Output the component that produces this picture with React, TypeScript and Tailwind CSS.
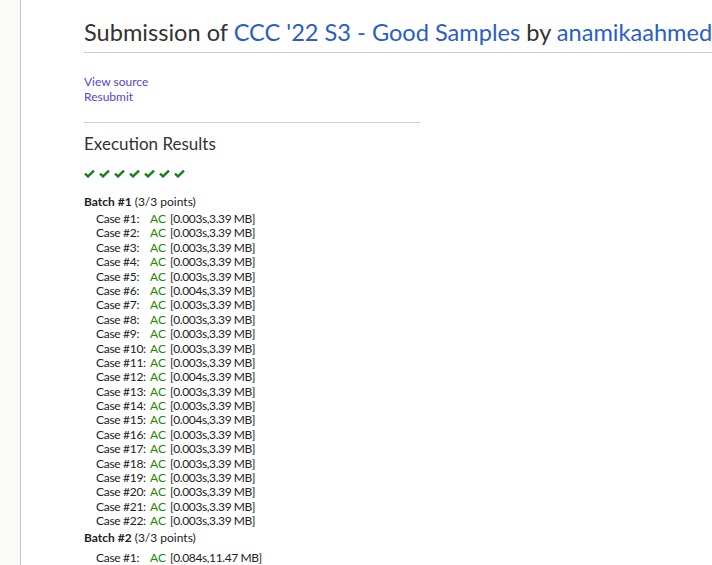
const font = { fontFamily: 'Lato, "Open Sans", sans-serif' };

const batch1 = [
  "0.003s,3.39 MB",
  "0.003s,3.39 MB",
  "0.003s,3.39 MB",
  "0.003s,3.39 MB",
  "0.003s,3.39 MB",
  "0.004s,3.39 MB",
  "0.003s,3.39 MB",
  "0.003s,3.39 MB",
  "0.003s,3.39 MB",
  "0.003s,3.39 MB",
  "0.003s,3.39 MB",
  "0.004s,3.39 MB",
  "0.003s,3.39 MB",
  "0.003s,3.39 MB",
  "0.004s,3.39 MB",
  "0.003s,3.39 MB",
  "0.003s,3.39 MB",
  "0.003s,3.39 MB",
  "0.003s,3.39 MB",
  "0.003s,3.39 MB",
  "0.003s,3.39 MB",
  "0.003s,3.39 MB",
];

function Check() {
  return (
    <svg width="11" height="9" viewBox="0 0 11 9" className="shrink-0">
      <path d="M1 4.6 L4 7.4 L10 1.6" fill="none" stroke="#12821e" strokeWidth="2.4" />
    </svg>
  );
}

function CaseRow({ n, data }: { n: number; data: string }) {
  return (
    <div className="flex h-[14.4px] items-center whitespace-nowrap pl-[12px] leading-[14.4px]">
      <span className="w-[54px] shrink-0 tracking-[-0.3px]">Case #{n}:</span>
      <span className="w-[20px] shrink-0 text-[#1a8a00]">AC</span>
      <span className="tracking-[-0.4px]">[{data}]</span>
    </div>
  );
}

export default function App() {
  return (
    <div className="flex h-[565px] w-[712px] overflow-hidden bg-white text-[#333]" style={font}>
      <div className="w-[21px] shrink-0 border-r border-[#c8c8c8] bg-[#fafaf8]" />
      <div className="min-w-0 flex-1 pl-[63px]">
        <h2 className="mt-[18px] whitespace-nowrap border-b border-[#ccc] pb-[6px] text-[23.6px] leading-[28px] text-[#333]">
          Submission of <span className="text-[#2a5dc8]">CCC '22 S3 - Good Samples</span> by{" "}
          <span className="text-[#2a5dc8]">anamikaahmed</span>
        </h2>
        <div className="mt-[21px] text-[12px] leading-[15px] text-[#5248cc]">
          <div>View source</div>
          <div>Resubmit</div>
        </div>
        <div className="mt-[18px] w-[336px] border-t border-[#ccc]" />
        <div className="mt-[10px] text-[17px] leading-[22px] text-[#333]">Execution Results</div>
        <div className="mt-[14px] flex gap-[4px]">
          {Array.from({ length: 7 }).map((_, i) => (
            <Check key={i} />
          ))}
        </div>
        <div className="mt-[15px] text-[12px] text-[#222]">
          <div className="mb-[1px] leading-[18px]">
            <b>Batch #1</b> (3/3 points)
          </div>
          {batch1.map((d, i) => (
            <CaseRow key={i} n={i + 1} data={d} />
          ))}
          <div className="mb-[4px] leading-[18px]">
            <b>Batch #2</b> (3/3 points)
          </div>
          <CaseRow n={1} data="0.084s,11.47 MB" />
        </div>
      </div>
    </div>
  );
}
